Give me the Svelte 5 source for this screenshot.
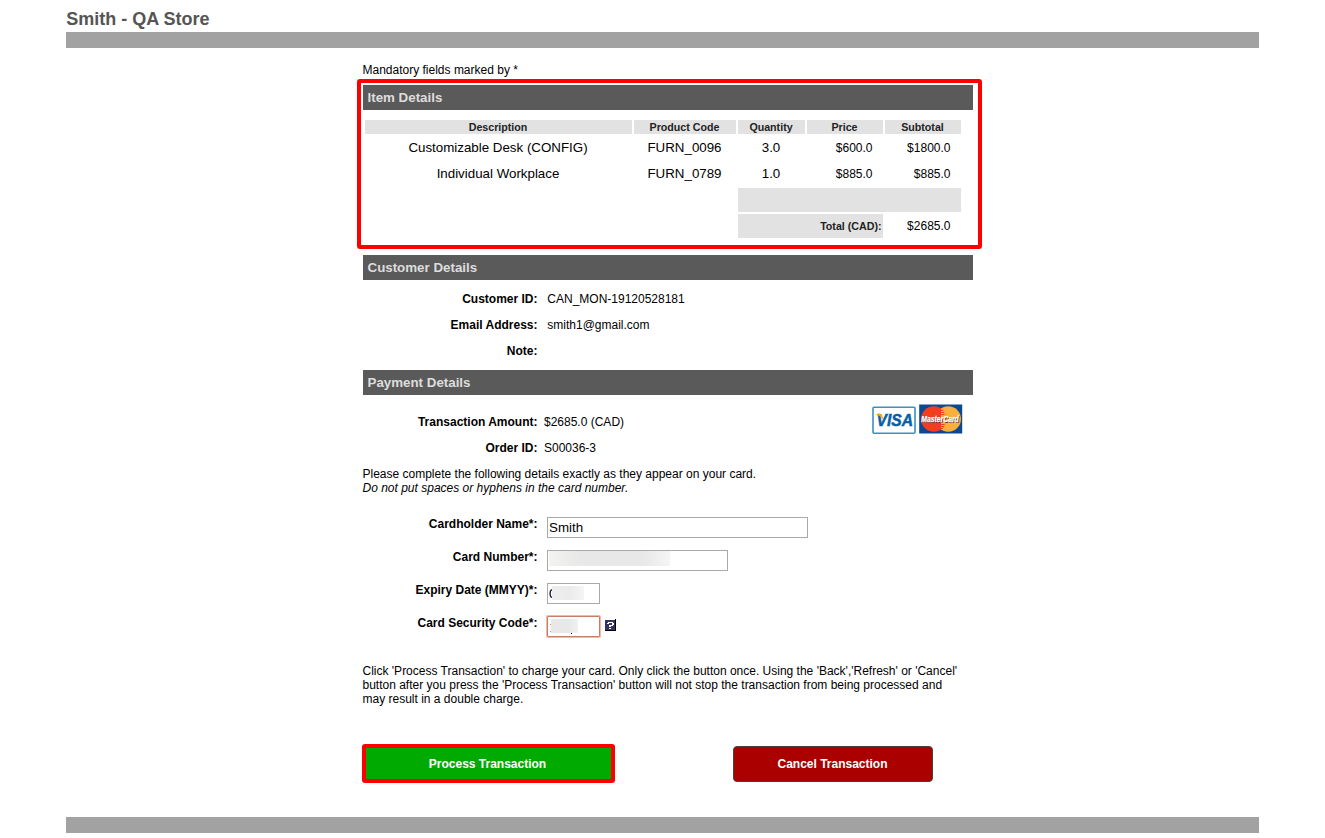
<script>
  const items = [
    { name: 'Customizable Desk (CONFIG)', code: 'FURN_0096', qty: '3.0', price: '$600.0', sub: '$1800.0' },
    { name: 'Individual Workplace', code: 'FURN_0789', qty: '1.0', price: '$885.0', sub: '$885.0' }
  ];
  const customer = [
    ['Customer ID:', 'CAN_MON-19120528181'],
    ['Email Address:', 'smith1@gmail.com'],
    ['Note:', '']
  ];
  const payment = [
    ['Transaction Amount:', '$2685.0 (CAD)'],
    ['Order ID:', 'S00036-3']
  ];
</script>

<div class="page">
  <header>
    <h1>Smith - QA Store</h1>
    <div class="bar"></div>
  </header>

  <main>
    <p class="mandatory">Mandatory fields marked by *</p>

    <section class="highlight">
      <h2>Item Details</h2>
      <div class="items">
        <b class="th">Description</b>
        <b class="th">Product Code</b>
        <b class="th">Quantity</b>
        <b class="th">Price</b>
        <b class="th">Subtotal</b>
        {#each items as item}
          <span class="cell">{item.name}</span>
          <span class="cell">{item.code}</span>
          <span class="cell">{item.qty}</span>
          <span class="cell money">{item.price}</span>
          <span class="cell money">{item.sub}</span>
        {/each}
        <span class="blank"></span>
        <b class="total">Total (CAD):</b>
        <span class="cell money">$2685.0</span>
      </div>
    </section>

    <h2>Customer Details</h2>
    <div class="rows customer">
      {#each customer as [label, value]}
        <div class="row"><b>{label}</b><span>{value}</span></div>
      {/each}
    </div>

    <h2>Payment Details</h2>
    <div class="payment">
      <div class="rows">
        {#each payment as [label, value]}
          <div class="row"><b>{label}</b><span>{value}</span></div>
        {/each}
      </div>
      <div class="cards">
        <svg width="44" height="29" viewBox="0 0 44 29" role="img" aria-label="Visa">
          <rect x="1" y="2.2" width="42" height="26" rx="1" fill="#fff" stroke="#3c8fc4" stroke-width="1.6" />
          <text x="4.5" y="21" textLength="36.500" lengthAdjust="spacingAndGlyphs" class="visa">VISA</text>
          <path d="M4 8.900h5.800l1.600 6.600C9.800 12.500 7.500 10.300 4 9.500z" fill="#f4a51c" />
        </svg>
        <svg width="44" height="30" viewBox="0 0 44 30" role="img" aria-label="MasterCard">
          <rect x=".2" y=".5" width="43" height="29" fill="#0b4992" />
          <circle cx="29.200" cy="15" r="12.800" fill="#fbb03b" />
          <circle cx="14.800" cy="15" r="12.800" fill="#ef3e23" />
          <path d="M22 4.400a12.800 12.800 0 0 1 0 21.200z" fill="#fbb03b" />
          <path d="M20 6.500h4M19 8.500h6M18.500 10.500h7M18.500 20.500h7M19 22.500h6M20 24.500h4" stroke="#ef3e23" stroke-width="1" />
          <text x="3" y="18.800" textLength="37.500" lengthAdjust="spacingAndGlyphs" class="mc mcshadow">MasterCard</text>
          <text x="2.300" y="18" textLength="37.500" lengthAdjust="spacingAndGlyphs" class="mc">MasterCard</text>
        </svg>
      </div>
    </div>

    <p class="instructions">
      Please complete the following details exactly as they appear on your card.<br />
      <i>Do not put spaces or hyphens in the card number.</i>
    </p>

    <form>
      <label for="holder">Cardholder Name*:</label>
      <div class="control"><input id="holder" class="holder" value="Smith" /></div>
      <label for="number">Card Number*:</label>
      <div class="control"><div id="number" class="masked number"><i></i></div></div>
      <label for="expiry">Expiry Date (MMYY)*:</label>
      <div class="control">
        <div id="expiry" class="masked expiry">
          <svg width="3" height="19" viewBox="0 0 3 19"><path d="M3 5.500C.4 6.500.4 12.500 3 13.500" fill="none" stroke="#1c1430" stroke-width="1.300" /></svg>
          <i></i>
        </div>
      </div>
      <label for="cvc">Card Security Code*:</label>
      <div class="control">
        <div id="cvc" class="masked cvc">
          <svg width="2" height="19" viewBox="0 0 2 19"><path d="M1 7h1v1H1zM1 14h1v1H1z" fill="#d9963c" /></svg>
          <i></i>
        </div>
        <svg class="help" width="11" height="12" viewBox="0 0 11 12" shape-rendering="crispEdges">
          <path d="M0 1h10V0h1v12H0z" fill="#000" />
          <path d="M0 1h10v10H0z" fill="#333366" />
          <path d="M3 3h5v1h1v2H8v1H6v1H4V6h3V4H4v1H2V4h1zM4 9h2v1H4z" fill="#fff" />
        </svg>
      </div>
    </form>

    <p class="notice">
      Click 'Process Transaction' to charge your card. Only click the button once. Using the 'Back','Refresh' or 'Cancel'<br />
      button after you press the 'Process Transaction' button will not stop the transaction from being processed and<br />
      may result in a double charge.
    </p>

    <div class="actions">
      <button class="process">Process Transaction</button>
      <button class="cancel">Cancel Transaction</button>
    </div>
  </main>

  <div class="bar"></div>
</div>

<style>
  :global(body) { margin: 0; background: #fff; }
  .page {
    box-sizing: border-box;
    height: 838px;
    padding: 0 66px;
    overflow: hidden;
    font: 12px/14px "Liberation Sans", Arial, sans-serif;
    color: #000;
  }
  h1 { margin: 0; padding: 8px 0 0 .25px; height: 24px; font-size: 18px; line-height: 22px; color: #555; }
  .bar { height: 16px; background: #a2a2a2; }
  main { box-sizing: border-box; height: 769px; width: 610px; margin-left: 296.5px; padding-top: 15px; }
  p { margin: 0; white-space: nowrap; }
  .highlight {
    box-sizing: border-box;
    width: 625px;
    height: 170px;
    margin: 2px 0 6px -5.5px;
    padding: 2px 5px 0 1.5px;
    border: 4px solid #f00;
    border-radius: 3px;
  }
  h2 {
    box-sizing: border-box;
    width: 610px;
    height: 25px;
    margin: 0;
    padding-left: 5px;
    font-size: 13.33px;
    line-height: 25px;
    color: #ddd;
    background: #5a5a5a;
  }
  .items {
    display: grid;
    grid-template-columns: 267px 102px 67px 76px 76px;
    grid-template-rows: 14px repeat(4, 24px);
    gap: 2px;
    margin: 10px 0 0 2px;
  }
  .th { font-size: 10.67px; line-height: 14px; text-align: center; background: #e2e2e2; color: #222; }
  .cell { font-size: 13.33px; line-height: 23px; text-align: center; }
  .money { font-size: 12px; line-height: 24px; text-align: right; padding-right: 10px; }
  .blank { grid-column: 3 / 6; background: #e2e2e2; }
  .total { grid-column: 3 / 5; padding-right: 1px; font-size: 10.67px; line-height: 24px; text-align: right; background: #e2e2e2; color: #222; }
  .row { display: grid; grid-template-columns: 175px auto; column-gap: 6.5px; height: 26px; line-height: 26px; }
  .row b, label { text-align: right; }
  .customer { padding: 6px 0; }
  .customer .row { column-gap: 9.8px; }
  .payment { display: flex; justify-content: space-between; height: 72px; }
  .payment .rows { padding-top: 14px; }
  .cards { display: flex; gap: 3px; padding: 9px 10px 0 0; }
  .cards svg { overflow: visible; }
  .cards svg:first-child { margin-top: 1px; }
  .visa { font: italic bold 16.500px "Liberation Sans", sans-serif; fill: #085fa5; stroke: #085fa5; stroke-width: .5; }
  .mc { font: italic bold 8.500px "Liberation Sans", sans-serif; fill: #fff; stroke: #fff; stroke-width: .25; }
  .mcshadow { fill: #5d2c35; stroke: none; }
  form { display: grid; grid-template-columns: 175px auto; grid-auto-rows: 33px; column-gap: 9.5px; margin-top: 22px; height: 132px; }
  label { font-weight: bold; }
  .control { display: flex; align-items: flex-start; }
  input, .masked {
    box-sizing: border-box;
    height: 21px;
    padding: 0 2px;
    border: 1px solid #a9a9a9;
    background: #fff;
    font: 13.33px/19px "Liberation Sans", Arial, sans-serif;
    color: #000;
    outline: 0;
  }
  .holder { width: 261px; padding-left: 1px; }
  .masked { display: flex; padding-left: 1px; }
  .masked svg { flex: none; }
  .number { width: 181px; }
  .number i { width: 121px; height: 15px; background: linear-gradient(90deg, #f3f3f1, #e8e8e8 25%, #e8e8e8 78%, #f5f5f5); }
  .expiry { width: 53px; }
  .expiry i { width: 32px; height: 14px; margin-top: 2px; background: linear-gradient(90deg, #ededed, #ebebeb 55%, #f5f5f5); }
  .cvc { position: relative; width: 53px; border-color: #c97d68; box-shadow: 0 0 0 1px #f5b8a2; border-radius: 1px; }
  .cvc i { width: 27px; height: 14px; margin-top: 2px; background: linear-gradient(90deg, #e8e8e8 65%, #f1f1f1); }
  .cvc::after { content: ""; position: absolute; left: 23px; top: 16px; width: 1px; height: 1px; background: #000; }
  .help { margin: 3px 0 0 5px; }
  .notice { margin-top: 15px; }
  .actions { display: flex; align-items: flex-start; margin-top: 38px; }
  button { box-sizing: border-box; padding: 0; color: #fff; font: bold 12px/14px "Liberation Sans", Arial, sans-serif; }
  .process { width: 253px; height: 39px; margin-left: -.5px; border: 4px solid #f00; border-radius: 3px; background: #0a0; padding-right: 2px; }
  .cancel { width: 200px; height: 36px; margin: 2px 0 0 118px; padding-right: 1px; border: 1px solid #444; border-radius: 4px; background: #a00; }
</style>
